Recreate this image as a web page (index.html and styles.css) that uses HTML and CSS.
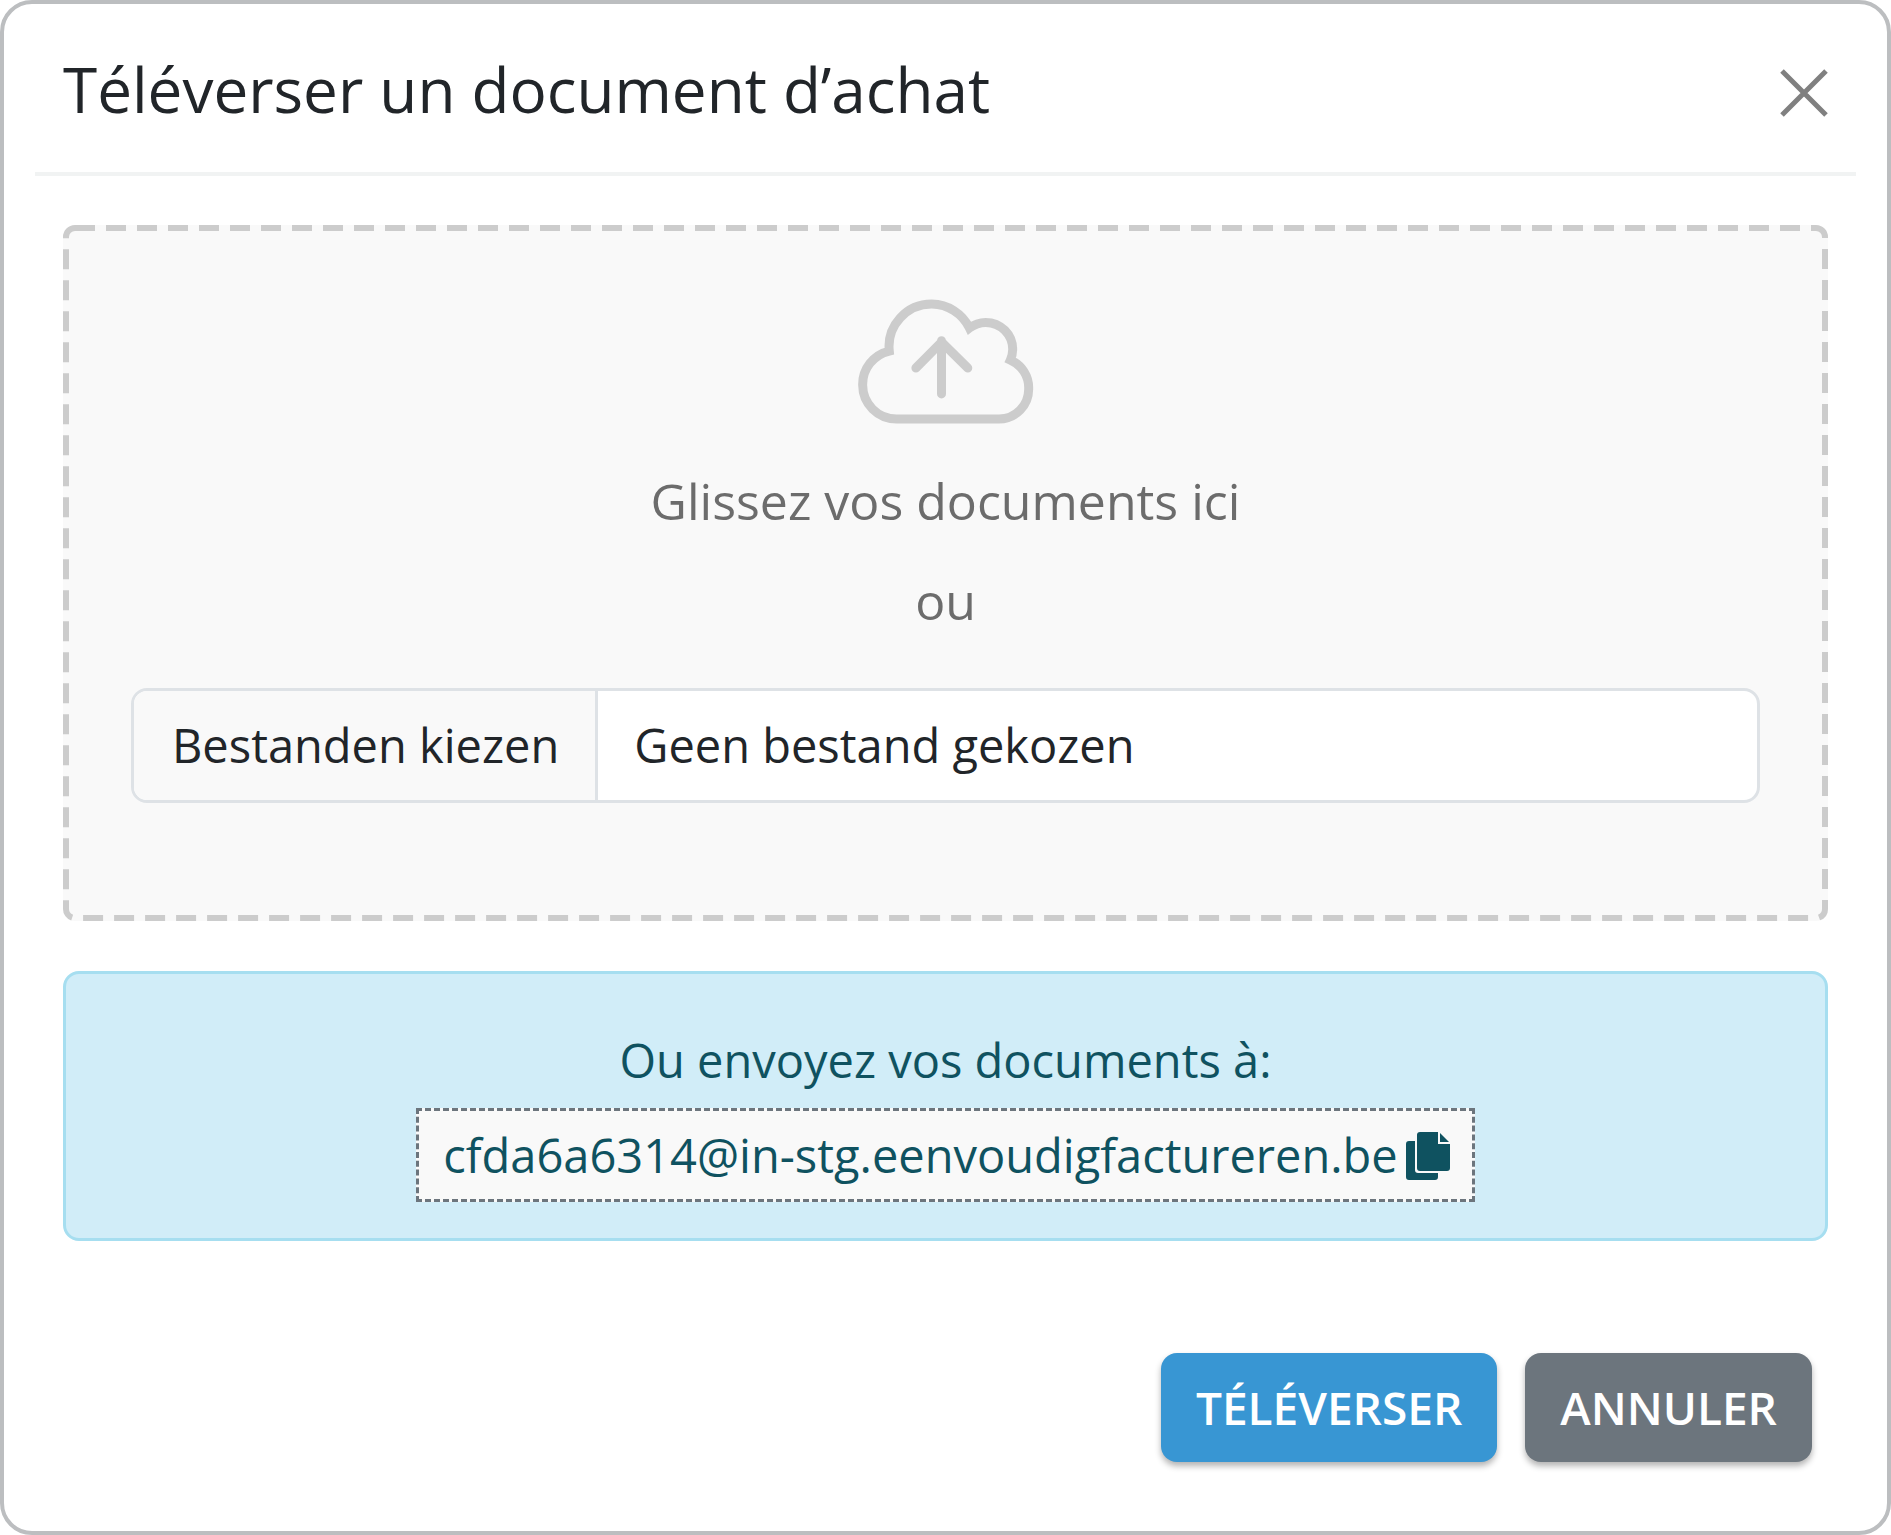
FILE: index.html
```html
<!DOCTYPE html>
<html lang="fr">
<head>
<meta charset="utf-8">
<meta name="viewport" content="width=device-width, initial-scale=1">
<title>Téléverser un document d’achat</title>
<link rel="stylesheet" href="styles.css">
</head>
<body>
<main class="modal" role="dialog" aria-labelledby="modal-title">
  <header class="modal-header">
    <h1 class="modal-title" id="modal-title">Téléverser un document d’achat</h1>
    <button class="close" type="button" aria-label="Fermer">
      <svg class="close-icon" viewBox="0 0 48 48" aria-hidden="true"><path d="M2 2L46 46M46 2L2 46"/></svg>
    </button>
  </header>
  <form class="modal-form">
    <section class="dropzone">
      <svg class="dropzone-outline" aria-hidden="true"><rect class="dropzone-dashes" x="3" y="3" rx="9"/></svg>
      <svg class="cloud" viewBox="108 88 532 375" aria-hidden="true">
        <path d="M227 448.500A102 102 0 0 1 125 346.500A103 103 0 0 1 205 244A128 128 0 0 1 333 103A128 128 0 0 1 446 175A82 82 0 0 1 495 158A81 81 0 0 1 576 239A81 81 0 0 1 569 271A91 91 0 0 1 624 358A90 90 0 0 1 535 448.500Z"/>
        <path class="cloud-arrow" d="M362 373V213M285 295L362 217L441 295"/>
      </svg>
      <p class="drop-text">Glissez vos documents ici</p>
      <p class="drop-text">ou</p>
      <label class="file">
        <span class="file-button">Bestanden kiezen</span>
        <span class="file-name">Geen bestand gekozen</span>
        <input class="file-input" type="file" multiple>
      </label>
    </section>
    <section class="mail-box">
      <p class="mail-text">Ou envoyez vos documents à:</p>
      <div class="address">
        <span>cfda6a6314@in-stg.eenvoudigfactureren.be</span>
        <button class="copy" type="button" aria-label="Copier">
          <svg class="copy-icon" viewBox="0 0 46 50" aria-hidden="true">
            <path d="M14 2H32V14H44V38Q44 41 41 41H14Q11 41 11 38V5Q11 2 14 2Z"/>
            <path d="M34 3L43 12H34Z"/>
            <path d="M3 11H9V40Q9 43 12 43H32V47Q32 50 29 50H3Q0 50 0 47V14Q0 11 3 11Z"/>
          </svg>
        </button>
      </div>
    </section>
    <footer class="actions">
      <button class="btn btn-primary" type="submit">TÉLÉVERSER</button>
      <button class="btn btn-secondary" type="button">ANNULER</button>
    </footer>
  </form>
</main>
</body>
</html>
```
FILE: styles.css
```css
* {
  box-sizing: border-box;
}

body {
  margin: 0;
  background: #fff;
  color: #212529;
  font-family: "Open Sans", "Noto Sans", sans-serif;
  font-size: 47px;
  line-height: 72px;
}

h1,
p {
  margin: 0;
}

button {
  font: inherit;
  border: 0;
  cursor: pointer;
}

.modal {
  min-height: 100vh;
  padding: 0 31px;
  border: 4px solid #bcbec0;
  border-radius: 32px;
  background: #fff;
}

.modal-header {
  display: flex;
  align-items: center;
  justify-content: space-between;
  height: 172px;
  padding: 10px 28px 0;
  border-bottom: 4px solid #f1f3f3;
}

.modal-title {
  padding-bottom: 8px;
  font-size: 62px;
  font-weight: 400;
  line-height: 90px;
}

.close {
  display: flex;
  padding: 0;
  background: none;
}

.close-icon {
  width: 48px;
  height: 48px;
  fill: none;
  stroke: #808080;
  stroke-width: 5;
}

.modal-form {
  padding: 49px 28px;
}

.dropzone {
  position: relative;
  display: flex;
  flex-direction: column;
  align-items: center;
  padding: 74px 68px 118px;
  border-radius: 12px;
  background: #f9f9f9;
}

.dropzone-outline {
  position: absolute;
  inset: 0;
  width: 100%;
  height: 100%;
  pointer-events: none;
}

.dropzone-dashes {
  width: calc(100% - 6px);
  height: calc(100% - 6px);
  fill: none;
  stroke: #ccc;
  stroke-width: 6;
  stroke-dasharray: 20 11;
}

.cloud {
  width: 177px;
  height: 125px;
  margin-bottom: 37px;
  overflow: visible;
  fill: none;
  stroke: #ccc;
  stroke-width: 27;
}

.cloud-arrow {
  stroke-linecap: round;
  stroke-linejoin: round;
}

.drop-text {
  margin-bottom: 20px;
  color: #6c6c6c;
  font-size: 50px;
  line-height: 80px;
}

.file {
  position: relative;
  display: flex;
  width: 100%;
  margin-top: 27px;
  overflow: hidden;
  border: 3px solid #dee2e6;
  border-radius: 16px;
  background: #fff;
  line-height: 109px;
}

.file-button {
  padding: 0 36px 0 38px;
  border-right: 3px solid #dee2e6;
  background: #f9f9f9;
}

.file-name {
  padding: 0 36px;
}

.file-input {
  position: absolute;
  inset: 0;
  opacity: 0;
  cursor: pointer;
}

.mail-box {
  display: flex;
  flex-direction: column;
  align-items: center;
  margin-top: 50px;
  padding: 50px 48px 36px;
  border: 3px solid #a6def0;
  border-radius: 16px;
  background: #d1edf8;
  color: #0f5260;
}

.mail-text {
  margin-bottom: 12px;
}

.address {
  display: flex;
  align-items: center;
  gap: 8px;
  padding: 8px 20px 8px 24px;
  border: 3px dashed #6c757d;
  background: #f9f9f9;
}

.copy {
  display: flex;
  padding: 0;
  background: none;
  color: inherit;
}

.copy-icon {
  width: 46px;
  height: 50px;
  fill: currentColor;
}

.actions {
  display: flex;
  justify-content: flex-end;
  gap: 28px;
  padding: 112px 16px 0;
}

.btn {
  padding: 0 35px;
  border-radius: 16px;
  box-shadow: 0 4px 6px rgba(0, 0, 0, 0.3);
  color: #fff;
  font-size: 46px;
  font-weight: 600;
  line-height: 109px;
}

.btn-primary {
  background: #3896d3;
}

.btn-secondary {
  background: #6c757d;
}
```
